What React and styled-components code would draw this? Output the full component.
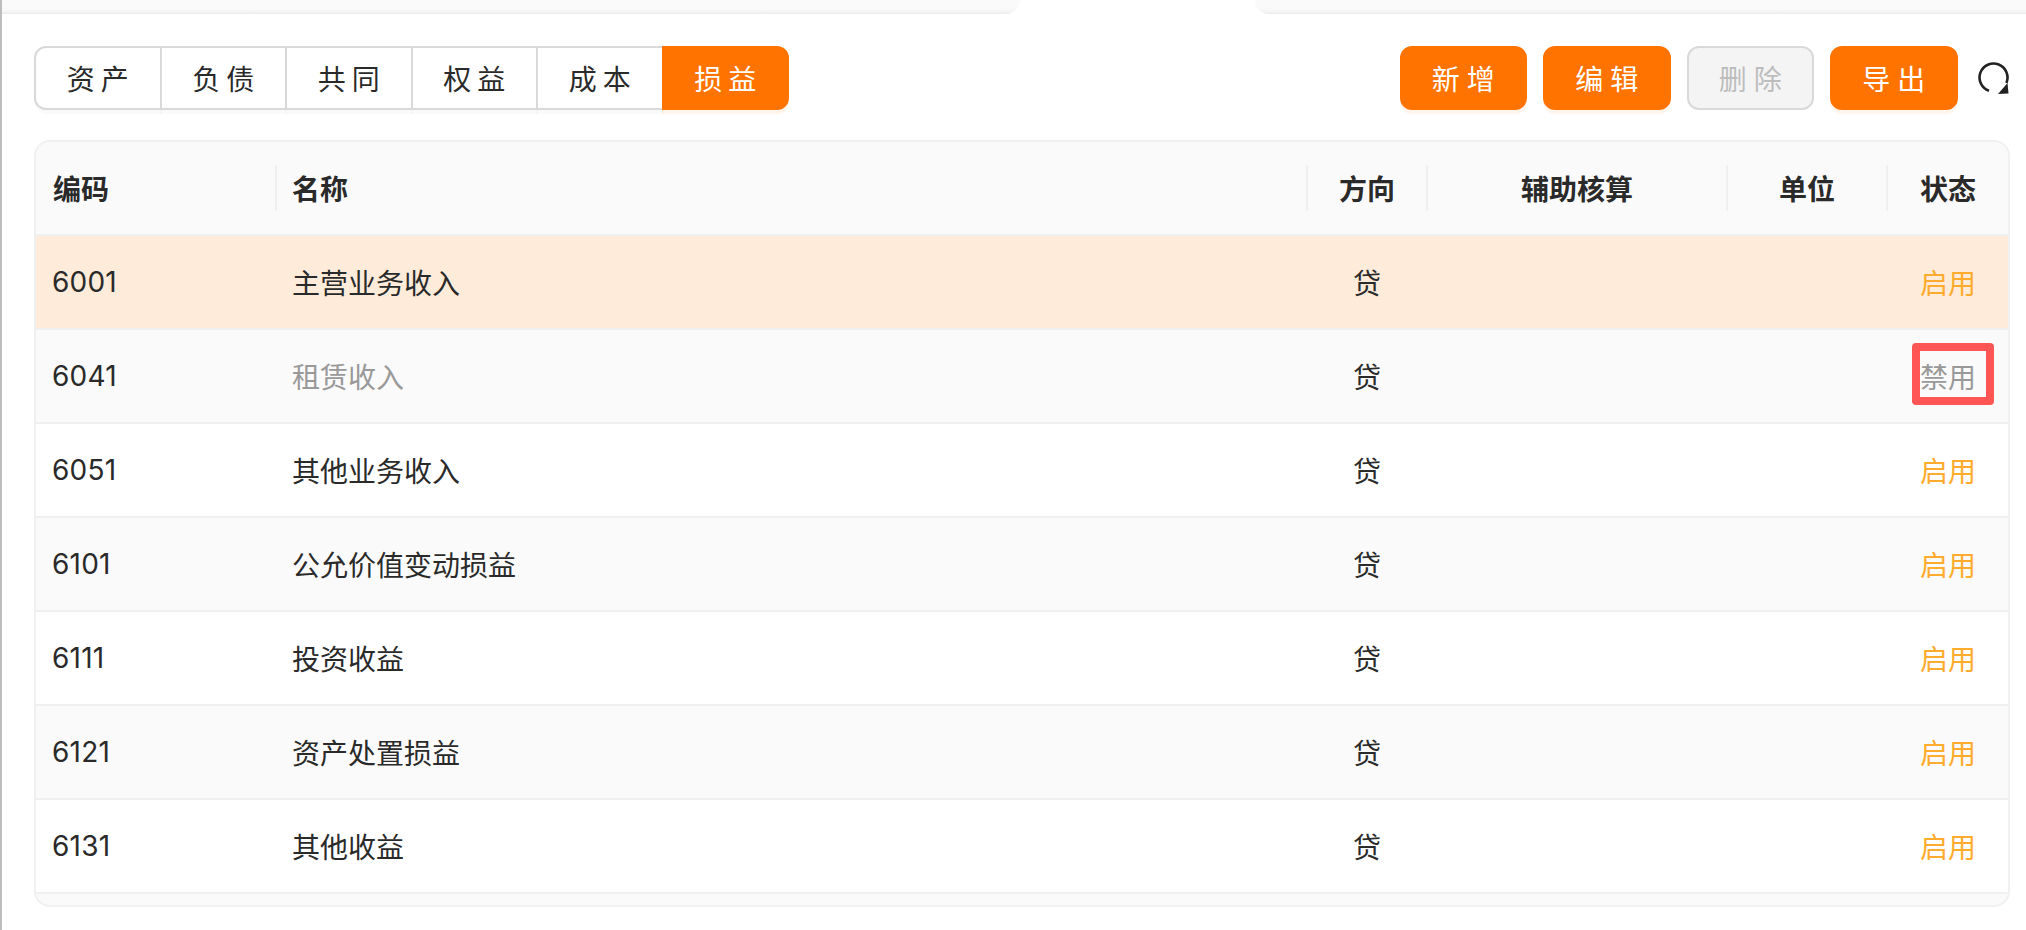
import React from "react"
import styled, { createGlobalStyle } from "styled-components"

const FONT = `"Inter", "Noto Sans CJK SC", sans-serif`

const GlobalStyle = createGlobalStyle`
  html, body {
    margin: 0;
    padding: 0;
    height: 100%;
    background: #fff;
    font-family: ${FONT};
  }
`

const Page = styled.div`
  width: 2026px;
  height: 930px;
  overflow: hidden;
  box-sizing: border-box;
  border-left: 2px solid #bcbebd;
  background: #fff;
`

const TabStrip = styled.div`
  display: flex;
  height: 14px;
  justify-content: space-between;
`

const TabEdge = styled.div`
  height: 14px;
  width: ${p => p.$width}px;
  background: linear-gradient(#fafafa 55%, #f6f6f6 80%, #ebebeb);
  border-radius: ${p => (p.$left ? "0 0 14px 0" : "0 0 0 14px")};
`

const Content = styled.div`
  padding: 32px 16px 0 32px;
`

const Toolbar = styled.div`
  display: flex;
  justify-content: space-between;
  align-items: flex-start;
  height: 64px;
`

const Segments = styled.div`
  display: flex;
  height: 64px;
`

const Segment = styled.div`
  box-sizing: border-box;
  width: 127.5px;
  display: flex;
  align-items: center;
  justify-content: center;
  font-size: 28px;
  letter-spacing: 6px;
  padding-left: 6px;
  color: ${p => (p.$active ? "#fff" : "#2a2a2a")};
  background: ${p => (p.$active ? "#ff7300" : "#fff")};
  border: 2px solid ${p => (p.$active ? "#ff7300" : "#d9d9d9")};
  margin-left: ${p => (p.$first ? 0 : -2)}px;
  border-radius: ${p => (p.$first ? "12px 0 0 12px" : p.$active ? "0 12px 12px 0" : 0)};
  box-shadow: 0 4px 0 ${p => (p.$active ? "rgba(255, 115, 0, 0.07)" : "rgba(0, 0, 0, 0.02)")};
`

const Actions = styled.div`
  display: flex;
  align-items: center;
  gap: 16px;
`

const ActionButton = styled.div`
  box-sizing: border-box;
  width: 127.5px;
  height: 64px;
  display: flex;
  align-items: center;
  justify-content: center;
  border-radius: 12px;
  font-size: 28px;
  letter-spacing: 7px;
  padding-left: 7px;
  color: ${p => (p.$disabled ? "#bdbdbd" : "#fff")};
  background: ${p => (p.$disabled ? "#f4f4f4" : "#ff7300")};
  border: 2px solid ${p => (p.$disabled ? "#d9d9d9" : "#ff7300")};
  box-shadow: ${p => (p.$disabled ? "none" : "0 4px 0 rgba(255, 115, 0, 0.07)")};
`

const Refresh = styled.div`
  width: 33px;
  height: 64px;
  display: flex;
  align-items: center;
  justify-content: center;
  margin-left: 3px;
  margin-right: 0.5px;
`

const Table = styled.div`
  margin-top: 30px;
  box-sizing: border-box;
  border: 2px solid #f0f0f0;
  border-radius: 16px;
  height: 767px;
  overflow: hidden;
  background: #fafafa;
`

const Row = styled.div`
  display: grid;
  grid-template-columns: 239px 1031px 120px 300px 160px 1fr;
  box-sizing: border-box;
  height: 94px;
  align-items: center;
  border-bottom: 2px solid #f0f0f0;
  background: ${p => p.$bg};
`

const HeadCell = styled.div`
  position: relative;
  font-size: 28px;
  font-weight: 600;
  color: #2a2a2a;
  padding-left: ${p => (p.$align === "left" ? "17px" : "2px")};
  text-align: ${p => p.$align || "center"};

  &::before {
    content: "";
    display: ${p => (p.$first ? "none" : "block")};
    position: absolute;
    left: 0;
    top: 50%;
    height: 46px;
    margin-top: -23px;
    width: 2px;
    background: #f0f0f0;
  }
`

const Cell = styled.div`
  font-size: 28px;
  color: ${p => p.$color || "#2a2a2a"};
  padding-left: ${p => (p.$align === "left" ? "17px" : "2px")};
  text-align: ${p => p.$align || "center"};
`

const CodeCell = styled(Cell)`
  padding-left: 16px;
  letter-spacing: 0.2px;
`

const Marked = styled.span`
  position: relative;
  display: inline-block;

  &::after {
    content: "";
    position: absolute;
    box-sizing: border-box;
    left: -8px;
    right: -18px;
    top: 50%;
    height: 62px;
    margin-top: -33px;
    border: 8px solid #ff5555;
    border-radius: 4px;
  }
`

const rows = [
  ["6001", "主营业务收入", "启用"],
  ["6041", "租赁收入", "禁用"],
  ["6051", "其他业务收入", "启用"],
  ["6101", "公允价值变动损益", "启用"],
  ["6111", "投资收益", "启用"],
  ["6121", "资产处置损益", "启用"],
  ["6131", "其他收益", "启用"],
]

const rowBg = idx => {
  if (idx === 0) return "#ffebd9"
  return idx % 2 === 1 ? "#fafafa" : "#fff"
}

const RefreshIcon = () => (
  <svg width="33" height="33" viewBox="0 0 33 33">
    <path
      d="M12 28.76 A 14 14 0 1 1 29.4 21"
      fill="none"
      stroke="#222"
      strokeWidth="2.6"
    />
    <path d="M21 32 L31.5 31.5 L30.5 21 Z" fill="#222" />
  </svg>
)

const App = () => (
  <Page>
    <GlobalStyle />
    <TabStrip>
      <TabEdge $left $width={1018} />
      <TabEdge $width={771} />
    </TabStrip>
    <Content>
      <Toolbar>
        <Segments>
          {["资产", "负债", "共同", "权益", "成本", "损益"].map((t, idx) => (
            <Segment key={t} $first={idx === 0} $active={idx === 5}>
              {t}
            </Segment>
          ))}
        </Segments>
        <Actions>
          <ActionButton>新增</ActionButton>
          <ActionButton>编辑</ActionButton>
          <ActionButton $disabled>删除</ActionButton>
          <ActionButton>导出</ActionButton>
          <Refresh>
            <RefreshIcon />
          </Refresh>
        </Actions>
      </Toolbar>
      <Table>
        <Row $bg="#fafafa">
          <HeadCell $first $align="left">编码</HeadCell>
          <HeadCell $align="left">名称</HeadCell>
          <HeadCell>方向</HeadCell>
          <HeadCell>辅助核算</HeadCell>
          <HeadCell>单位</HeadCell>
          <HeadCell>状态</HeadCell>
        </Row>
        {rows.map((r, idx) => {
          const off = r[2] === "禁用"
          return (
            <Row key={r[0]} $bg={rowBg(idx)}>
              <CodeCell $align="left">{r[0]}</CodeCell>
              <Cell $align="left" $color={off ? "#999" : undefined}>{r[1]}</Cell>
              <Cell>贷</Cell>
              <Cell />
              <Cell />
              <Cell $color={off ? "#999" : "#ffab2e"}>
                {off ? <Marked>{r[2]}</Marked> : r[2]}
              </Cell>
            </Row>
          )
        })}
      </Table>
    </Content>
  </Page>
)

export default App
